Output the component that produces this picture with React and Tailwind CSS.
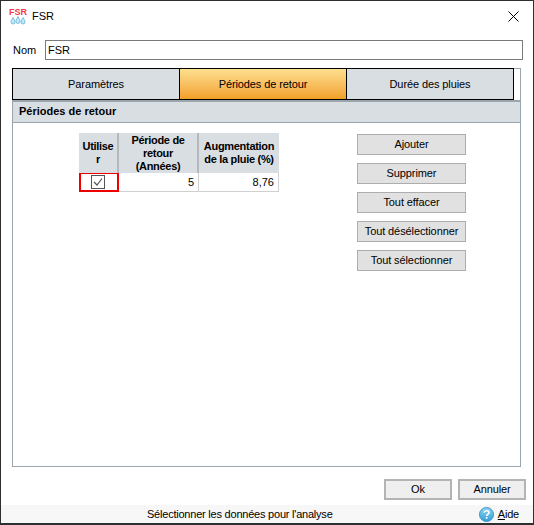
import React from 'react';

const FONT = "font-['Liberation_Sans',Arial,sans-serif]";

function AppIcon() {
  return (
    <div className="flex flex-col items-center w-[16px] leading-none">
      <span className="text-[9px] font-bold text-[#ef3b46] leading-[8px] tracking-[0px]">FSR</span>
      <svg width="16" height="9" viewBox="0 0 16 8">
        <path d="M3 1C2 3 1 4 1 5.5a2 2 0 0 0 4 0C5 4 4 3 3 1z" fill="#c4eaf8" stroke="#4aa8d8" strokeWidth="0.7" />
        <path d="M8 0C7 2 6 3.5 6 5a2 2 0 0 0 4 0C10 3.5 9 2 8 0z" fill="#c4eaf8" stroke="#4aa8d8" strokeWidth="0.7" />
        <path d="M13 1C12 3 11 4 11 5.5a2 2 0 0 0 4 0C15 4 14 3 13 1z" fill="#c4eaf8" stroke="#4aa8d8" strokeWidth="0.7" />
      </svg>
    </div>
  );
}

function HelpIcon() {
  return (
    <svg width="15" height="15" viewBox="0 0 15 15">
      <defs>
        <linearGradient id="helpBlue" x1="0" y1="0" x2="0" y2="1">
          <stop offset="0" stopColor="#8fd4f2" />
          <stop offset="1" stopColor="#2f9fd8" />
        </linearGradient>
      </defs>
      <circle cx="7.5" cy="7.5" r="7" fill="url(#helpBlue)" stroke="#3a93c4" strokeWidth="1" />
      <path d="M5 5.7C5.3 4.3 6.3 3.8 7.6 3.8 9.1 3.8 10 4.6 10 5.7 10 7.2 7.7 7.3 7.6 9" fill="none" stroke="#fff" strokeWidth="1.6" />
      <rect x="6.8" y="10" width="1.7" height="1.7" fill="#fff" />
    </svg>
  );
}

function GrayButton({ label }) {
  return (
    <button className="w-[109px] h-[21px] bg-[#e1e1e1] border border-[#adadad] text-[11px] tracking-[-0.1px] text-black leading-none">
      {label}
    </button>
  );
}

function DialogButton({ label }) {
  return (
    <button className="w-[68px] h-[21px] bg-[#efefef] border-2 border-[#b4b4b4] text-[11px] tracking-[-0.1px] text-black leading-none">
      {label}
    </button>
  );
}

function Tab({ label, active, width }) {
  return (
    <div
      className={`h-full flex items-center justify-center text-[11px] tracking-[-0.1px] text-black border-r border-black ${width} ${
        active ? 'bg-gradient-to-b from-[#fde08e] to-[#f2a024]' : 'bg-[#d9dee3]'
      }`}
    >
      {label}
    </div>
  );
}

export default function App() {
  return (
    <div className={`${FONT} w-[534px] h-[525px] flex flex-col bg-white border border-[#2f2f2f] border-b-2 overflow-hidden text-black`}>
      {/* Title bar */}
      <div className="h-[30px] flex items-center shrink-0 pl-[9px] pr-[14px]">
        <AppIcon />
        <span className="ml-[6px] text-[11px]">FSR</span>
        <svg className="ml-auto" width="11" height="11" viewBox="0 0 11 11">
          <path d="M.5.5l10 10M10.5.5l-10 10" stroke="#000" strokeWidth="1" fill="none" />
        </svg>
      </div>

      {/* Name */}
      <div className="h-[20px] mt-[9px] flex items-center shrink-0 pl-[12px] pr-[10px]">
        <span className="w-[32px] text-[11px]">Nom</span>
        <div className="flex-1 h-[20px] border border-[#7a7a7a] flex items-center px-[2px] text-[11px]">FSR</div>
      </div>

      {/* Tabbed panel */}
      <div className="mt-[8px] ml-[11px] mr-[12px] h-[399px] border border-[#9aa5ad] flex flex-col shrink-0">
        <div className="h-[32px] w-[502px] flex border border-black border-r-0 -mt-px -ml-px shrink-0">
          <Tab label="Paramètres" width="w-[167px]" />
          <Tab label="Périodes de retour" active width="w-[167px]" />
          <Tab label="Durée des pluies" width="w-[167px]" />
        </div>
        <div className="h-[23px] bg-[#d9dee3] border-b border-[#9aa5ad] border-t-2 border-t-[#9aa5ad] flex items-center pl-[6px] text-[11px] font-bold shrink-0 pb-[2px]">
          Périodes de retour
        </div>

        <div className="flex pl-[66px] pt-[10px]">
          {/* Table */}
          <div className="w-[200px]">
            <div className="grid grid-cols-[40px_80px_80px] h-[40px] text-[11px] font-bold leading-[13px] tracking-[-0.3px] text-center">
              <div className="bg-[#d9dee3] border-r-2 border-[#b4b9bd] flex items-center justify-center break-all px-[3px]">Utilise r</div>
              <div className="bg-[#d9dee3] border-r-2 border-[#b4b9bd] flex items-center justify-center px-[6px]">Période de retour (Années)</div>
              <div className="bg-[#d9dee3] flex items-center justify-center">Augmentation de la pluie (%)</div>
            </div>
            <div className="grid grid-cols-[40px_80px_80px] h-[19px] text-[11px]">
              <div className="border-2 border-t border-[#ee0000] flex items-center justify-center pr-[3px]">
                <svg width="14" height="14" viewBox="0 0 14 14">
                  <rect x="0.5" y="0.5" width="13" height="13" fill="#fff" stroke="#555" />
                  <path d="M3 7l3 3 5-6.5" fill="none" stroke="#555" strokeWidth="1.2" />
                </svg>
              </div>
              <div className="border-r border-b border-[#d0d0d0] flex items-center justify-end pr-[4px]">5</div>
              <div className="border-r border-b border-[#d0d0d0] flex items-center justify-end pr-[4px]">8,76</div>
            </div>
          </div>

          {/* Side actions */}
          <div className="ml-[78px] mt-[1px] flex flex-col gap-[8px]">
            <GrayButton label="Ajouter" />
            <GrayButton label="Supprimer" />
            <GrayButton label="Tout effacer" />
            <GrayButton label="Tout désélectionner" />
            <GrayButton label="Tout sélectionner" />
          </div>
        </div>
      </div>

      {/* Dialog buttons */}
      <div className="mt-[12px] h-[21px] flex justify-end gap-[6px] pr-[7px] shrink-0">
        <DialogButton label="Ok" />
        <DialogButton label="Annuler" />
      </div>

      {/* Status bar */}
      <div className="mt-[5px] flex-1 bg-[#f7f7f7] relative flex items-center justify-end pr-[14px] text-[11px]">
        <span className="absolute left-[146px] top-[1px] tracking-[-0.22px]">Sélectionner les données pour l'analyse</span>
        <HelpIcon />
        <span className="ml-[4px] tracking-[-0.2px]"><span className="underline">A</span>ide</span>
      </div>
    </div>
  );
}
